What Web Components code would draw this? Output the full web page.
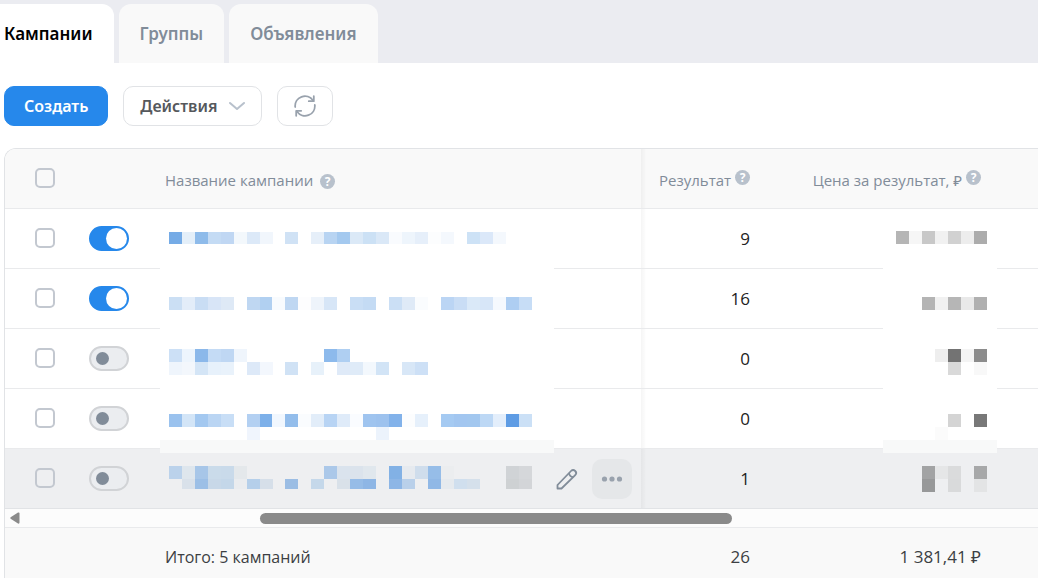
<!DOCTYPE html>
<html lang="ru">
<head>
<meta charset="utf-8">
<meta name="viewport" content="width=device-width, initial-scale=1">
<title>Кампании</title>
<style>
  html {
    background: #fff;
  }

  body {
    margin: 0;
    overflow: hidden;
    font-family: "Open Sans", "Noto Sans", sans-serif;
    color: #222;
  }
</style>
</head>
<body>
<campaigns-page></campaigns-page>

<script>
class AdsTab extends HTMLElement {
    constructor() {
        super();
        this.attachShadow({ mode: "open" });
    }

    connectedCallback() {
        const active = this.hasAttribute("active");
        this.shadowRoot.innerHTML = `
      <style>
        :host {
          display: block;
        }

        button {
          height: 59px;
          padding: 0 21px;
          border: 0;
          border-radius: 12px 12px 0 0;
          background: #f9f9f9;
          color: #818c99;
          font: 600 17px/24px "Noto Sans", sans-serif;
          cursor: pointer;
        }

        :host([active]) button {
          background: #fff;
          color: #000;
          padding-left: 4px;
          border-top-left-radius: 0;
        }
      </style>
      <button type="button" role="tab" aria-selected="${active}"><slot></slot></button>
    `;
    }
}

class AdsButton extends HTMLElement {
    constructor() {
        super();
        this.attachShadow({ mode: "open" });
    }

    connectedCallback() {
        const label = this.getAttribute("label");
        this.shadowRoot.innerHTML = `
      <style>
        :host {
          display: block;
        }

        button {
          display: flex;
          align-items: center;
          justify-content: center;
          gap: 12px;
          box-sizing: border-box;
          height: 40px;
          padding: 0 16px;
          border: 1px solid #e1e3e6;
          border-radius: 10px;
          background: #fff;
          color: #55585c;
          font: 600 16px/24px "Noto Sans", sans-serif;
          cursor: pointer;
        }

        :host([primary]) button {
          padding: 0 19px;
          border-color: #2688eb;
          background: #2688eb;
          color: #fff;
        }
      </style>
      <button type="button" ${label ? `aria-label="${label}"` : ""}><slot></slot></button>
    `;
    }
}

class AdsHint extends HTMLElement {
    constructor() {
        super();
        this.attachShadow({ mode: "open" });
        this.shadowRoot.innerHTML = `
      <style>
        :host {
          display: inline-block;
        }

        span {
          display: block;
          width: 15px;
          height: 15px;
          border-radius: 50%;
          background: #b8c1cc;
          color: #fff;
          font: 700 12px/15px "Noto Sans", sans-serif;
          text-align: center;
        }
      </style>
      <span>?</span>
    `;
    }
}

class AdsCheckbox extends HTMLElement {
    constructor() {
        super();
        this.attachShadow({ mode: "open" });
    }

    connectedCallback() {
        this.shadowRoot.innerHTML = `
      <style>
        :host {
          display: block;
        }

        input {
          display: block;
          appearance: none;
          box-sizing: border-box;
          width: 20px;
          height: 20px;
          margin: 0;
          border: 2px solid #c3c8d0;
          border-radius: 5px;
        }

        input:checked {
          border-color: #2688eb;
          background: #2688eb;
        }
      </style>
      <input type="checkbox" aria-label="${this.getAttribute("label")}">
    `;
    }
}

class AdsSwitch extends HTMLElement {
    constructor() {
        super();
        this.attachShadow({ mode: "open" });
    }

    connectedCallback() {
        this.shadowRoot.innerHTML = `
      <style>
        :host {
          display: block;
        }

        input {
          display: flex;
          align-items: center;
          appearance: none;
          box-sizing: border-box;
          width: 40px;
          height: 25px;
          margin: 0;
          padding: 0 5px;
          border: 2px solid #d1d3d6;
          border-radius: 13px;
          background: #ebedf0;
        }

        input::before {
          content: "";
          width: 13px;
          height: 13px;
          border-radius: 50%;
          background: #818c99;
        }

        input:checked {
          justify-content: flex-end;
          padding: 0;
          border-color: #2688eb;
          background: #2688eb;
        }

        input:checked::before {
          width: 21px;
          height: 21px;
          background: #fff;
        }
      </style>
      <input type="checkbox" role="switch" aria-label="${this.getAttribute("label")}"
        ${this.hasAttribute("on") ? "checked" : ""}>
    `;
    }
}

// Runs are [x, y, height, colors]: 13px cells laid left to right, "-" leaves a cell empty.
const MOSAICS = {
    names: {
        width: 394,
        runs: [
            [9, 23, 12, "75abe6 e4eff9 8ebbea c4dbf4 c0d7f3 f3f8fc dce9f8 f1f6fc"],
            [125, 23, 12, "d0e2f5 - e6eff9 b8d4f2 a4c9ef dbe9f7 cce1f5 dae8f7 f9fbfe eef5fc e6effa fcfdfe f4f8fd - cde2f6 dbe8f9 f4f8fd"],
            [9, 88, 13, "cbdff4 e3edf9 c9ddf4 d8e5f7 dee9f6 - bfd7f2 b1d0f1"],
            [112, 88, 13, "f8fbfe bfd7f2 fdfdfe eef4fb d7e6f7 - c9def5 c4dbf4 - cbdff5 dfeaf7 fafcfe - bbd5f4 c9ddf5 dae9f8 d7e6f8 f5f9fe aecef2 c7ddf6"],
            [9, 140, 13, "cce0f6 edf5fd 8bb8ea c4dbf5 bfd7f3 eff5fc"],
            [164, 140, 13, "8dbaec afcff2"],
            [9, 153, 13, "eff5fc f3f7fc d4e5f6 e7f1fb e9f2fb - dde9f8 f3f7fd"],
            [125, 153, 13, "d0e2f5 - e7f1fa - dfeaf8 dfebf8 f3f8fd d2e4f6 - d8e7f7 cde0f6"],
            [9, 205, 13, "9ac2ee d3e5f7 a3c8f0 bad5f3 c8def6 - b3d0f2 7db0e9"],
            [112, 205, 13, "f1f7fe 93bdeb fafcfe e2edf9 b8d4f4 dfebf9 fafcff 9fc4ef 9dc2ee 82b2ea fcfdfe e6f0fb - a5caf2 a2c6f0 a2c7ef bdd8f5 e3eefb 5e9ce4 cbe0f6"],
            [87, 218, 13, "f0f5fd"],
            [216, 218, 13, "ecf3fc"],
            [9, 257, 13, "bbd2eb dee6ed a7c6e8 cadbea c9daea e4e8eb"],
            [164, 257, 13, "abc8e9 dae3ed dbe3ec e0e7ed - 82b1e5 e6eaef cfddec 96bde8 ebedef - - - - d0d3d6 d5d7da"],
            [22, 270, 10, "d9e1ea 9cbfe6 c8d8e8 c4d7e9 eaecef b5cfea d6dfe9"],
            [125, 270, 10, "9bbde4 - c5d8ea - d9e1e9 96bce7 8eb6e5 - 8db6e6 b9d0ea - 90b8e6 e6eaee d0dfee d5e0eb - - ced1d3 d3d5d8"],
        ],
    },
    prices: {
        width: 114,
        runs: [
            [13, 22, 13, "b5b5b5 f6f6f6 c8c8c8 f1f1f1 d1d1d1 ededed acacac"],
            [39, 88, 13, "b4b4b4 f1f1f1 b6b6b6 e9e9e9 b0b0b0"],
            [52, 140, 13, "eeeeee 737373 f4f4f4 8c8c8c"],
            [65, 153, 13, "d9d9d9 - f8f8f8"],
            [65, 205, 13, "d4d4d4 - 787878"],
            [52, 218, 13, "fbfbfb"],
            [39, 257, 13, "a2a3a4 e5e6e7 dadbdc - a7a8a9"],
            [39, 270, 13, "979899 - d9dadb - e3e4e5"],
        ],
    },
};

class PixelMosaic extends HTMLElement {
    constructor() {
        super();
        this.attachShadow({ mode: "open" });
    }

    connectedCallback() {
        const { width, runs } = MOSAICS[this.getAttribute("kind")];
        const cells = runs.flatMap(([x, y, height, colors]) =>
            colors.split(" ").map((color, i) =>
                color === "-" ? "" : `<rect x="${x + i * 13}" y="${y}" width="13" height="${height}" fill="#${color}"/>`
            )
        );
        this.shadowRoot.innerHTML = `
      <style>
        :host {
          display: block;
          pointer-events: none;
        }

        svg {
          display: block;
          shape-rendering: crispEdges;
        }
      </style>
      <svg width="${width}" height="290" aria-hidden="true">
        <rect width="${width}" height="231" fill="#fff"/>
        <rect y="231" width="${width}" height="13" fill="#f8f9f9"/>
        ${cells.join("")}
      </svg>
    `;
    }
}

class CampaignTable extends HTMLElement {
    #rows = [
        { on: true, result: "9" },
        { on: true, result: "16" },
        { on: false, result: "0" },
        { on: false, result: "0" },
        { on: false, result: "1", hovered: true },
    ];

    constructor() {
        super();
        this.attachShadow({ mode: "open" });
    }

    connectedCallback() {
        this.render();
    }

    #row({ on, result, hovered }, i) {
        const actions = `
          <div class="actions">
            <button type="button" aria-label="Редактировать">
              <svg width="24" height="24" viewBox="0 0 24 24" fill="none" stroke="#818c99" stroke-width="1.800" stroke-linejoin="round">
                <path d="M2.500 21.500v-3.500L16 4a2.900 2.900 0 0 1 4.200 4.200L6.500 21.500z"/>
                <path d="M14 6q.500 3.700 4.200 4.200"/>
              </svg>
            </button>
            <button type="button" class="more" aria-label="Ещё">
              <svg width="24" height="24" viewBox="0 0 24 24" fill="#99a2ad">
                <circle cx="4.500" cy="12" r="2.600"/>
                <circle cx="12" cy="12" r="2.600"/>
                <circle cx="19.500" cy="12" r="2.600"/>
              </svg>
            </button>
          </div>`;

        return `
        <tr class="${hovered ? "hovered" : ""}">
          <td class="check"><ads-checkbox label="Выбрать кампанию ${i + 1}"></ads-checkbox></td>
          <td><ads-switch label="Статус кампании ${i + 1}" ${on ? "on" : ""}></ads-switch></td>
          <td class="name">
            ${i === 0 ? '<pixel-mosaic kind="names"></pixel-mosaic>' : ""}
            ${hovered ? actions : ""}
          </td>
          <td class="num edge">${result}</td>
          <td class="num price">${i === 0 ? '<pixel-mosaic kind="prices"></pixel-mosaic>' : ""}</td>
          <td></td>
        </tr>`;
    }

    render() {
        this.shadowRoot.innerHTML = `
      <style>
        :host {
          display: block;
          border: 1px solid #e1e3e6;
          border-width: 1px 0 0 1px;
          border-radius: 12px 0 0 0;
          overflow: hidden;
        }

        table {
          width: 100%;
          table-layout: fixed;
          border-collapse: separate;
          border-spacing: 0;
          font-size: 17px;
          line-height: 24px;
        }

        .c-check { width: 84px; }
        .c-switch { width: 71px; }
        .c-result { width: 129px; }
        .c-price { width: 231px; }
        .c-rest { width: 37px; }

        th,
        td {
          box-sizing: border-box;
          height: 60px;
          padding: 0;
          border-bottom: 1px solid #e9eaec;
          text-align: left;
        }

        th {
          background-color: #f9f9f9;
          color: #818c99;
          font-size: 15px;
          font-weight: 400;
          padding-top: 2px;
          white-space: nowrap;
        }

        .check {
          padding: 0 0 1px 30px;
        }

        .name {
          position: relative;
          padding-left: 5px;
        }

        th ads-hint {
          vertical-align: 0;
          margin-left: 3px;
        }

        th.num ads-hint {
          vertical-align: 4px;
          margin-left: 0;
        }

        .num {
          position: relative;
          padding-right: 20px;
          text-align: right;
        }

        .edge {
          background-image: linear-gradient(to right, rgba(0, 0, 0, 0.04), rgba(0, 0, 0, 0.01) 4px, transparent 5px);
        }

        /* spans all the body rows, so it has to sit above their cells */
        pixel-mosaic {
          position: absolute;
          z-index: 1;
          top: 0;
          left: 0;
        }

        .price pixel-mosaic {
          left: auto;
          right: 4px;
        }

        .hovered td {
          background-color: #eeeff1;
          border-color: #e1e3e6;
        }

        .actions {
          display: flex;
          justify-content: flex-end;
          gap: 5px;
          padding-right: 9px;
        }

        .actions button {
          display: flex;
          align-items: center;
          justify-content: center;
          width: 40px;
          height: 40px;
          padding: 0;
          border: 0;
          border-radius: 10px;
          background: none;
        }

        .actions .more {
          background: #e5e7e9;
        }

        .scroll td {
          height: 19px;
          background: #fcfcfc;
        }

        .track {
          display: grid;
          grid-template-columns: 15px 240fr 472fr 306fr;
          align-items: center;
        }

        .arrow {
          justify-self: end;
        }

        .thumb {
          grid-column: 3;
          height: 11px;
          border-radius: 6px;
          background: #8a8a8a;
        }

        .total td {
          height: 58px;
          border: 0;
          background: #f9f9f9;
          color: #3c3f43;
        }

        .total .name {
          font-size: 16px;
        }
      </style>

      <table>
        <colgroup>
          <col class="c-check"><col class="c-switch"><col>
          <col class="c-result"><col class="c-price"><col class="c-rest">
        </colgroup>
        <thead>
          <tr>
            <th class="check"><ads-checkbox label="Выбрать все"></ads-checkbox></th>
            <th></th>
            <th class="name">Название кампании <ads-hint></ads-hint></th>
            <th class="num edge">Результат <ads-hint></ads-hint></th>
            <th class="num">Цена за результат, ₽ <ads-hint></ads-hint></th>
            <th></th>
          </tr>
        </thead>
        <tbody>${this.#rows.map((row, i) => this.#row(row, i)).join("")}</tbody>
        <tfoot>
          <tr class="scroll">
            <td colspan="6">
              <div class="track">
                <svg class="arrow" width="10" height="12" viewBox="0 0 10 12" fill="#8a8a8a">
                  <path d="M8 0.500L1 5a1.200 1.200 0 0 0 0 2l7 4.500q1.500.500 1.500-1v-9q0-1.500-1.500-1z"/>
                </svg>
                <div class="thumb"></div>
              </div>
            </td>
          </tr>
          <tr class="total">
            <td></td>
            <td></td>
            <td class="name">Итого: 5 кампаний</td>
            <td class="num">26</td>
            <td class="num">1 381,41 ₽</td>
            <td></td>
          </tr>
        </tfoot>
      </table>
    `;
    }
}

class CampaignsPage extends HTMLElement {
    constructor() {
        super();
        this.attachShadow({ mode: "open" });
        this.shadowRoot.innerHTML = `
      <style>
        :host {
          display: block;
        }

        nav {
          display: flex;
          gap: 5px;
          padding-top: 4px;
          background: #ebecf1;
        }

        .toolbar {
          display: flex;
          gap: 15px;
          padding: 23px 4px 22px;
        }

        campaign-table {
          margin-left: 4px;
        }

        svg {
          display: block;
        }
      </style>

      <nav role="tablist">
        <ads-tab active>Кампании</ads-tab>
        <ads-tab>Группы</ads-tab>
        <ads-tab>Объявления</ads-tab>
      </nav>

      <div class="toolbar">
        <ads-button primary>Создать</ads-button>
        <ads-button>
          Действия
          <svg width="16" height="10" viewBox="0 0 16 10" fill="none" stroke="#b8c1cc" stroke-width="2" stroke-linecap="round" stroke-linejoin="round">
            <path d="M1 2l7 6 7-6"/>
          </svg>
        </ads-button>
        <ads-button label="Обновить">
          <svg width="22" height="22" viewBox="0 0 22 22" fill="none" stroke="#99a2ad" stroke-width="1.800" stroke-linecap="round" stroke-linejoin="round">
            <path d="M1.200 12A9.800 9.800 0 0 1 19 5.400"/>
            <path d="M19.800 1.200v5h-5"/>
            <path d="M20.800 10A9.800 9.800 0 0 1 3 16.600"/>
            <path d="M2.200 20.800v-5h5"/>
          </svg>
        </ads-button>
      </div>

      <campaign-table></campaign-table>
    `;
    }
}

customElements.define("ads-tab", AdsTab);
customElements.define("ads-button", AdsButton);
customElements.define("ads-hint", AdsHint);
customElements.define("ads-checkbox", AdsCheckbox);
customElements.define("ads-switch", AdsSwitch);
customElements.define("pixel-mosaic", PixelMosaic);
customElements.define("campaign-table", CampaignTable);
customElements.define("campaigns-page", CampaignsPage);
</script>
</body>
</html>
